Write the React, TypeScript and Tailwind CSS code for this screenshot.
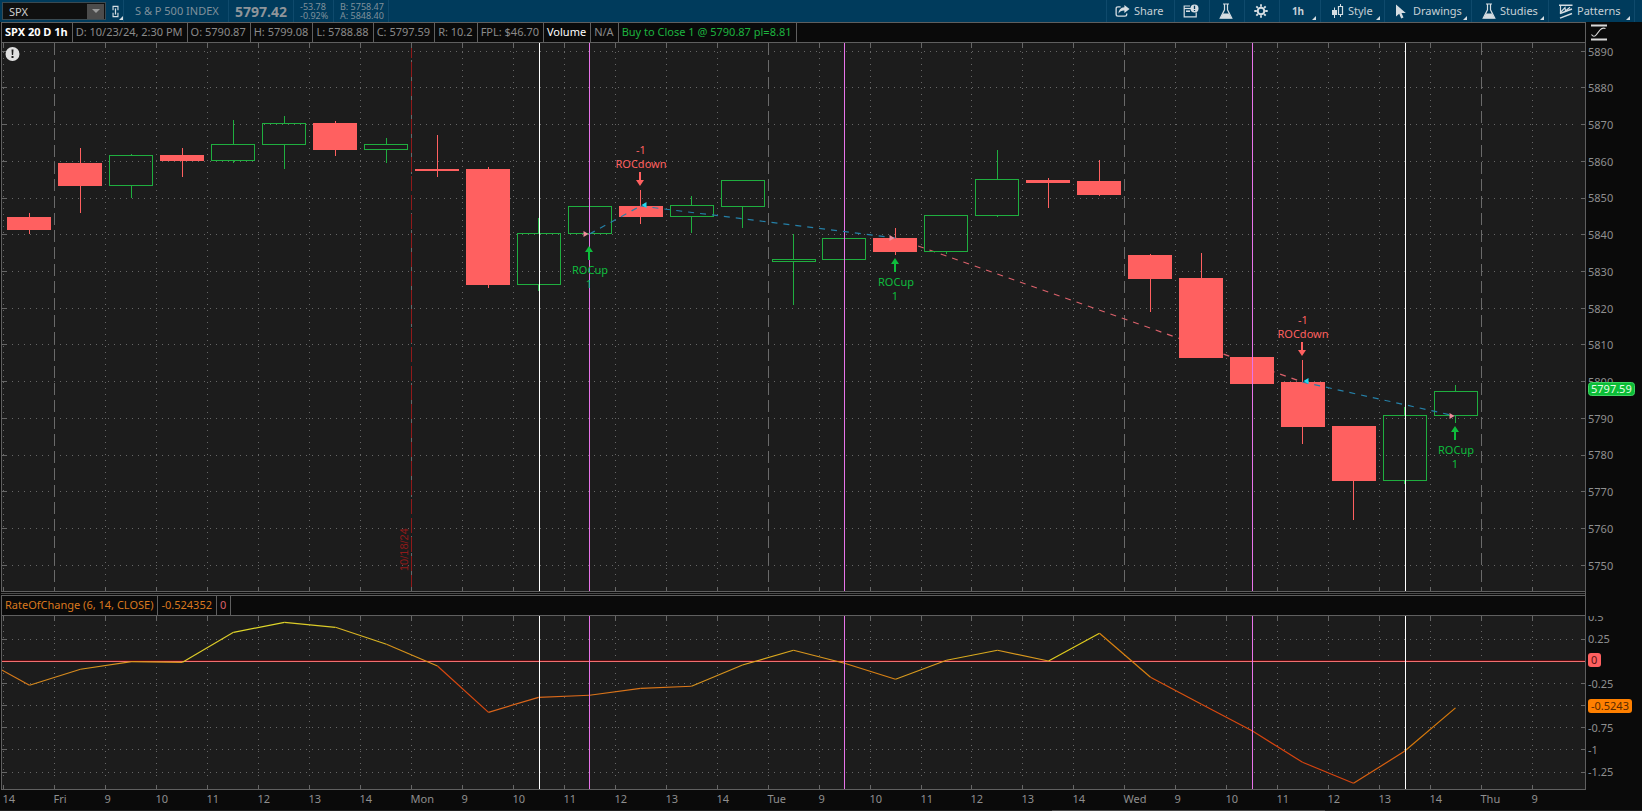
import React from 'react';

type Candle = [open: number, high: number, low: number, close: number];

interface Size {
  width: number;
  height: number;
}

const RED = '#ff6060';
const GREEN = '#1fae3f';
const GRID = '#666666';

const BARS_VISIBLE = 31.06;

const candles: Candle[] = [
  [5844.93, 5846.02, 5840.3, 5841.39],
  [5859.64, 5863.73, 5846.02, 5853.38],
  [5853.38, 5862.09, 5850.11, 5861.82],
  [5861.82, 5863.73, 5855.83, 5860.18],
  [5860.18, 5871.35, 5859.64, 5864.81],
  [5864.54, 5872.44, 5858.01, 5870.53],
  [5870.53, 5871.08, 5861.55, 5863.18],
  [5863.18, 5866.45, 5859.64, 5864.81],
  [5858.01, 5867.27, 5855.83, 5857.46],
  [5858.01, 5858.55, 5825.6, 5826.42],
  [5826.42, 5844.66, 5824.78, 5840.58],
  [5840.3, 5847.93, 5837.85, 5847.93],
  [5847.93, 5852.29, 5843.03, 5844.93],
  [5844.93, 5850.65, 5840.58, 5848.2],
  [5847.66, 5855.01, 5841.94, 5855.01],
  [5832.68, 5840.3, 5820.97, 5833.5],
  [5833.22, 5839.22, 5833.22, 5839.22],
  [5839.22, 5841.94, 5834.59, 5835.4],
  [5835.4, 5845.48, 5834.86, 5845.48],
  [5845.21, 5863.18, 5844.93, 5855.28],
  [5855.01, 5855.56, 5847.39, 5854.19],
  [5854.74, 5860.46, 5850.65, 5850.93],
  [5834.59, 5834.86, 5819.06, 5828.05],
  [5828.32, 5835.13, 5806.54, 5806.54],
  [5806.81, 5816.88, 5799.18, 5799.46],
  [5800.0, 5805.99, 5783.12, 5787.75],
  [5788.02, 5788.02, 5762.42, 5773.04],
  [5773.04, 5793.19, 5772.22, 5791.01],
  [5790.87, 5799.08, 5788.88, 5797.59],
];

// value at the end of each segment and the colour of that segment
const roc: [number, string][] = [
  [0.048, '#d77a1a'],
  [-0.269, '#d77a1a'],
  [-0.088, '#d68a1e'],
  [-0.002, '#d9951e'],
  [-0.009, '#dc961e'],
  [0.33, '#dccb28'],
  [0.443, '#e0d82a'],
  [0.387, '#dccc28'],
  [0.195, '#d9b423'],
  [-0.051, '#d8921a'],
  [-0.575, '#d9480f'],
  [-0.405, '#d9651a'],
  [-0.382, '#d9681a'],
  [-0.303, '#d9741a'],
  [-0.28, '#d9761a'],
  [-0.04, '#d8941e'],
  [0.127, '#d9a81e'],
  [-0.02, '#d8951e'],
  [-0.201, '#d98014'],
  [0.014, '#d99b1e'],
  [0.127, '#d9aa1e'],
  [0.006, '#d9981e'],
  [0.319, '#e0cc1e'],
  [-0.179, '#d9800f'],
  [-0.484, '#d9520f'],
  [-0.786, '#d9480f'],
  [-1.14, '#d6440f'],
  [-1.378, '#d6440f'],
  [-1.016, '#d9600f'],
  [-0.5243, '#d97a0a'],
];

const timeLabels = [
  '14', 'Fri', '9', '10', '11', '12', '13', '14', 'Mon', '9', '10', '11', '12', '13', '14', 'Tue',
  '9', '10', '11', '12', '13', '14', 'Wed', '9', '10', '11', '12', '13', '14', 'Thu', '9',
];

const prices = [5890, 5880, 5870, 5860, 5850, 5840, 5830, 5820, 5810, 5800, 5790, 5780, 5770, 5760, 5750];
const rocLevels = [0.5, 0.25, 0, -0.25, -0.5, -0.75, -1, -1.25];

const signals: { bar: number; kind: 'up' | 'down' }[] = [
  { bar: 11, kind: 'up' },
  { bar: 12, kind: 'down' },
  { bar: 17, kind: 'up' },
  { bar: 25, kind: 'down' },
  { bar: 28, kind: 'up' },
];

const verticals = [
  { bar: 10, color: '#ffffff', shift: 1 },
  { bar: 11, color: '#e874ea', shift: 0 },
  { bar: 16, color: '#e874ea', shift: 0 },
  { bar: 24, color: '#e874ea', shift: 0 },
  { bar: 27, color: '#ffffff', shift: 1 },
];

const PRICE_TOP = 5892.32;
const PRICE_SPAN = 149.24;
const ROC_TOP = 0.5147;
const ROC_SPAN = 1.957;

const gridX = (i: number, width: number) => Math.floor(52.6 + ((i - 1) * width) / BARS_VISIBLE) + 0.5;
const barX = (i: number, width: number) => Math.floor(27.6 + i * (width / BARS_VISIBLE - 0.03)) + 0.5;
const bodyX = (i: number, width: number) => Math.floor(56.5 + ((i - 1) * width) / BARS_VISIBLE);
const priceY = (p: number, height: number) => Math.round(((PRICE_TOP - p) / PRICE_SPAN) * height);
const rocY = (v: number, height: number) => ((ROC_TOP - v) / ROC_SPAN) * height;

function useSize(initial: Size) {
  const ref = React.useRef<HTMLDivElement>(null);
  const [size, setSize] = React.useState(initial);

  React.useLayoutEffect(() => {
    const el = ref.current;
    if (!el) return;
    const update = () => setSize({ width: el.clientWidth, height: el.clientHeight });
    update();
    const observer = new ResizeObserver(update);
    observer.observe(el);
    return () => observer.disconnect();
  }, []);

  return { ref, ...size };
}

const Grid = ({ width, height, ys, days }: Size & { ys: number[]; days?: boolean }) => (
  <g stroke={GRID} strokeWidth={1}>
    {ys.map((y) => (
      <g key={y}>
        <line x1={4} x2={width - 12} y1={y} y2={y} strokeDasharray="1 5" />
        <line x1={0} x2={5} y1={y} y2={y} />
        <line x1={width - 4} x2={width} y1={y} y2={y} />
      </g>
    ))}
    {timeLabels.map((label, i) => {
      const x = gridX(i, width);
      const isDay = days && /[a-z]/.test(label);
      return (
        <g key={i}>
          {isDay ? (
            <line x1={x} x2={x} y1={0} y2={height} strokeDasharray="12 5" stroke="#6a6a6a" />
          ) : (
            <line x1={x} x2={x} y1={9} y2={height - 8} strokeDasharray="1 5" />
          )}
          {isDay && label === 'Mon' && (
            <line x1={x} x2={x} y1={0} y2={height} strokeDasharray="15 4" stroke="#8f1a1a" />
          )}
          <line x1={x} x2={x} y1={0} y2={5} />
          <line x1={x} x2={x} y1={height - 4} y2={height} />
        </g>
      );
    })}
  </g>
);

const VerticalLines = ({ width, height }: Size) => (
  <>
    {verticals.map(({ bar, color, shift }) => {
      const x = barX(bar, width) + shift;
      return <line key={bar} x1={x} x2={x} y1={0} y2={height} stroke={color} />;
    })}
  </>
);

const PriceChart = () => {
  const { ref, width, height } = useSize({ width: 1583, height: 548 });
  const at = (bar: number, price: number) => ({ x: barX(bar, width), y: priceY(price, height) });
  const trade = (a: { x: number; y: number }, b: { x: number; y: number }, color: string) => (
    <line x1={a.x} y1={a.y} x2={b.x} y2={b.y} stroke={color} strokeWidth={1.2} strokeDasharray="6 6" />
  );
  const entry1 = at(11, 5840.3);
  const exit1 = at(12, 5847.93);
  const entry2 = at(17, 5839.22);
  const exit2 = at(25, 5800);
  const entry3 = at(28, 5790.87);

  return (
    <div ref={ref} className="relative min-h-0 min-w-0 flex-1 overflow-hidden border-x border-b border-[#5f5f5f] bg-[#1c1c1c]">
      <svg className="absolute inset-0 h-full w-full text-[11px]" aria-label="SPX hourly candles">
        <Grid
          width={width}
          height={height}
          days
          ys={prices.map((p) => Math.floor(((PRICE_TOP - p) / PRICE_SPAN) * height - 0.3) + 0.5)}
        />
        <text
          transform={`translate(${gridX(8, width) - 4} ${height - 20}) rotate(-90)`}
          fill="#8f1a1a"
          className="font-['Liberation_Sans']"
        >
          10/18/24
        </text>
        {trade(entry2, exit2, '#d9606a')}
        {candles.map(([open, high, low, close], i) => {
          const x = barX(i, width);
          const left = bodyX(i, width);
          const up = close > open;
          const top = priceY(Math.max(open, close), height);
          const bottom = priceY(Math.min(open, close), height);
          const color = up ? GREEN : RED;
          return (
            <g key={i} stroke={color}>
              <line x1={x} x2={x} y1={priceY(high, height)} y2={top} />
              <line x1={x} x2={x} y1={bottom} y2={priceY(low, height)} />
              {up ? (
                <rect x={left + 0.5} y={top + 0.5} width={43} height={Math.max(bottom - top - 1, 1)} fill="none" />
              ) : (
                <rect x={left} y={top} width={44} height={Math.max(bottom - top, 1)} fill={RED} stroke="none" />
              )}
            </g>
          );
        })}
        <VerticalLines width={width} height={height} />
        {trade(entry1, exit1, '#2580a8')}
        {trade(exit1, entry2, '#2580a8')}
        {trade(exit2, entry3, '#2580a8')}
        {[entry1, entry2, entry3].map(({ x, y }) => (
          <path key={x} d={`M${x - 6} ${y - 3}L${x - 1} ${y}L${x - 6} ${y + 3}Z`} fill="#f08c9c" />
        ))}
        {[exit1, exit2].map(({ x, y }) => (
          <path key={x} d={`M${x + 6} ${y - 4}L${x + 1} ${y - 1}L${x + 6} ${y + 2}Z`} fill="#22d8f0" />
        ))}
        {signals.map(({ bar, kind }) => {
          const x = barX(bar, width) - 0.5;
          const [, high, low] = candles[bar];
          if (kind === 'up') {
            const y = priceY(low, height) + 3;
            return (
              <g key={bar} fill="#0ebc3c" textAnchor="middle">
                <path d={`M${x} ${y}L${x + 4} ${y + 6}H${x + 1}V${y + 14}H${x - 1}V${y + 6}H${x - 4}Z`} />
                <text x={x + 1} y={y + 28}>ROCup</text>
                <text x={x} y={y + 42}>1</text>
              </g>
            );
          }
          const y = priceY(high, height) - 4;
          return (
            <g key={bar} fill={RED} textAnchor="middle">
              <path d={`M${x} ${y}L${x + 4} ${y - 6}H${x + 1}V${y - 14}H${x - 1}V${y - 6}H${x - 4}Z`} />
              <text x={x + 1} y={y - 18}>ROCdown</text>
              <text x={x + 1} y={y - 32}>-1</text>
            </g>
          );
        })}
        <circle cx={10.5} cy={11} r={7} fill="#e0e0e0" />
        <path d="M9.5 6.5h2l-.4 5.5h-1.2zM9.5 13h2v2h-2z" fill="#1c1c1c" />
      </svg>
    </div>
  );
};

const PriceAxis = () => {
  const { ref, height } = useSize({ width: 56, height: 549 });
  const h = height - 1;
  const tagY = priceY(5797.59, h) - 2;
  return (
    <div ref={ref} className="relative w-14 shrink-0">
      <svg className="absolute inset-0 h-full w-full text-[11px]" aria-label="Price axis">
        {prices.map((p) => (
          <text key={p} x={2} y={priceY(p, h) + 4} fill="#8f8f8f">{p}</text>
        ))}
        <rect x={2.5} y={tagY - 6.5} width={46} height={13} rx={3} fill="#0bbd37" stroke="#3fd463" />
        <text x={5} y={tagY + 4} fill="#e6ffe6">5797.59</text>
      </svg>
    </div>
  );
};

const RocChart = () => {
  const { ref, width, height } = useSize({ width: 1583, height: 173 });
  const zero = Math.floor(rocY(0, height)) + 0.5;
  return (
    <div ref={ref} className="relative min-h-0 min-w-0 flex-1 overflow-hidden border-x border-b border-[#5f5f5f] bg-[#1c1c1c]">
      <svg className="absolute inset-0 h-full w-full" aria-label="Rate of change">
        <Grid
          width={width}
          height={height}
          ys={rocLevels.filter((v) => v !== 0 && v < 0.5).map((v) => Math.floor(rocY(v, height)) + 0.5)}
        />
        <line x1={0} x2={width} y1={zero - 1} y2={zero - 1} stroke="#5a0c10" />
        <line x1={0} x2={width} y1={zero} y2={zero} stroke="#f07070" />
        {roc.slice(1).map(([value, color], i) => (
          <line
            key={i}
            x1={barX(i - 1, width)}
            y1={rocY(roc[i][0], height)}
            x2={barX(i, width)}
            y2={rocY(value, height)}
            stroke={color}
            strokeWidth={1.2}
          />
        ))}
        <VerticalLines width={width} height={height} />
      </svg>
    </div>
  );
};

const RocAxis = () => {
  const { ref, height } = useSize({ width: 56, height: 174 });
  const h = height - 1;
  const tagY = Math.round(rocY(-0.5243, h)) - 2;
  const zeroY = Math.round(rocY(0, h)) - 1;
  return (
    <div ref={ref} className="relative w-14 shrink-0">
      <svg className="absolute inset-0 h-full w-full text-[11px]" aria-label="Rate of change axis">
        {rocLevels.filter((v) => v !== 0 && v !== -0.5).map((v) => (
          <text key={v} x={2} y={Math.round(rocY(v, h)) + 4} fill="#8f8f8f">{v}</text>
        ))}
        <rect x={2} y={zeroY - 7} width={13} height={14} rx={3} fill={RED} />
        <text x={5} y={zeroY + 4} fill="#5c1010">0</text>
        <rect x={2} y={tagY - 7} width={44} height={14} rx={3} fill="#ff8000" />
        <text x={5} y={tagY + 4} fill="#5a2a00">-0.5243</text>
      </svg>
    </div>
  );
};

const TimeAxis = () => {
  const { ref, width } = useSize({ width: 1585, height: 20 });
  return (
    <div className="flex h-5 shrink-0">
      <div ref={ref} className="relative min-w-0 flex-1">
        <svg className="absolute inset-0 h-full w-full text-[11px]" aria-label="Time axis">
          {timeLabels.map((label, i) => (
            <text key={i} x={gridX(i, width - 2)} y={13} fill="#8f8f8f">{label}</text>
          ))}
        </svg>
      </div>
      <div className="w-14 shrink-0" />
    </div>
  );
};

const Corner = () => (
  <span className="absolute right-1 bottom-0.5 border-b-4 border-l-4 border-b-[#d5dde2] border-l-transparent" />
);

const ShareIcon = () => (
  <svg width="15" height="14" viewBox="0 0 16 14" fill="none">
    <path d="M6 2.5H3.2Q1.2 2.5 1.2 4.5v6q0 2 2 2h7.3q2 0 2-2V9.6" stroke="#d5dde2" strokeWidth="1.4" />
    <path d="M10 .5l5.5 4.3L10 9V6.5Q6 6.3 3.6 10 3.800 3.600 10 3z" fill="#d5dde2" />
  </svg>
);

const WindowAlertIcon = () => (
  <svg width="16" height="14" viewBox="0 0 16 14" fill="none">
    <path d="M7 2H1.200v10.800h12V8.500" stroke="#d5dde2" strokeWidth="1.200" />
    <path d="M1 4.500h7" stroke="#d5dde2" strokeWidth="1.200" />
    <path d="M3 7.200h4" stroke="#d5dde2" strokeWidth="1.600" />
    <circle cx="11.500" cy="4.400" r="4" fill="#d5dde2" />
    <path d="M11.500 1.800v3.200M11.500 5.900v1.200" stroke="#043b5c" strokeWidth="1.300" />
  </svg>
);

const FlaskIcon = () => (
  <svg width="14" height="17" viewBox="0 0 14 17" fill="none">
    <path d="M4 1h6M5.500 1v5.800L1.200 15.200h11.600L8.500 6.800V1" stroke="#d5dde2" strokeWidth="1.200" />
    <path d="M4 10.500h6l2.600 4.700H1.400z" fill="#d5dde2" />
  </svg>
);

const GearIcon = () => (
  <svg width="14" height="14" viewBox="0 0 14 14" fill="none" stroke="#d5dde2">
    <circle cx="7" cy="7" r="3.300" strokeWidth="2" />
    <path
      d="M7 .3v2.500M7 11.200v2.500M.3 7h2.500M11.200 7h2.500M2.300 2.300l1.700 1.700M10 10l1.700 1.700M2.300 11.700L4 10M10 4l1.700-1.700"
      strokeWidth="1.800"
    />
  </svg>
);

const StyleIcon = () => (
  <svg width="13" height="14" viewBox="0 0 13 14" fill="none" stroke="#d5dde2">
    <path d="M3.500 3.500V14M9.500 0v2M9.500 10.500V13" />
    <rect x="1" y="6" width="5" height="5" fill="#d5dde2" stroke="none" />
    <path d="M7.500 2.500h4v8h-4z" strokeWidth="1.200" />
  </svg>
);

const CursorIcon = () => (
  <svg width="12" height="15" viewBox="0 0 12 15" fill="#d5dde2">
    <path d="M1 .5v12l3.200-2.800 2 4.800 2.300-1-2-4.600h4.300z" />
  </svg>
);

const PatternsIcon = () => (
  <svg width="14" height="15" viewBox="0 0 14 15" fill="none" stroke="#d5dde2">
    <path d="M0 1.200h13.500M1 9.500L13 5M1 14.200L13 9.500" strokeWidth="1.400" />
    <path d="M1.500 1.500v7L6 3.500l.5 3.500L11 3.200" strokeWidth="1.200" />
  </svg>
);

const LinkIcon = () => (
  <svg width="7" height="13" viewBox="0 0 8 14" fill="none" stroke="#d5dde2">
    <path
      d="M1.200 5.500V1.200h5.600v4.300M1.200 8.500v4.300h5.600V8.500"
      strokeWidth="1.300"
    />
    <path d="M4 3.500v7" strokeWidth="1.400" />
  </svg>
);

const toolClass = 'relative flex h-full shrink-0 items-center border-l border-[#0f4a6c]';

const Toolbar = () => (
  <header className="flex h-[22px] shrink-0 items-center bg-[#003b5c] text-[#c6d0d6]">
    <div className="ml-0.5 flex h-[18px] w-[104px] shrink-0 items-center border border-[#3a4a52] bg-[#101010] pr-px">
      <input
        aria-label="Symbol"
        defaultValue="SPX"
        className="h-full min-w-0 flex-1 bg-transparent pl-1.5 text-[11px] text-[#d0d0d0] outline-none"
      />
      <button aria-label="Symbol list" className="flex h-[15px] w-[17px] items-center justify-center bg-[#4c4c4c]">
        <svg width="8" height="4" viewBox="0 0 8 4"><path d="M0 0h8L4 4z" fill="#9a9a9a" /></svg>
      </button>
    </div>
    <button aria-label="Link symbol" className="relative flex h-full w-[17px] shrink-0 items-center justify-center pl-0.5">
      <LinkIcon />
      <span className="absolute right-0 bottom-0.5 border-b-4 border-l-4 border-b-[#d5dde2] border-l-transparent" />
    </button>
    <div className="flex h-full items-center text-[#7f909b]">
      <span className="flex h-full w-[105px] items-center border-l border-[#0f4a6c] pl-[11px] text-[11px]">S &amp; P 500 INDEX</span>
      <span className="flex h-full w-[65px] items-center border-l border-[#0f4a6c] pl-1.5 text-[14px] font-bold text-[#8f959a]">5797.42</span>
      <span className="flex h-full w-10 flex-col justify-center border-l border-[#0f4a6c] pl-1.5 text-[9px] leading-[9px]">
        <span>-53.78</span>
        <span>-0.92%</span>
      </span>
      <span className="flex h-full w-[55px] flex-col justify-center border-l border-[#0f4a6c] pl-1.5 text-[9px] leading-[9px]">
        <span>B: 5758.47</span>
        <span>A: 5848.40</span>
      </span>
      <span className="h-full border-l border-[#0f4a6c]" />
    </div>
    <div className="ml-auto flex h-full items-center text-[11px]">
      <button className={`${toolClass} w-[68px] gap-1 pl-2`}><ShareIcon />Share</button>
      <button aria-label="Chart alerts" className={`${toolClass} w-[35px] justify-center pr-0.5`}><WindowAlertIcon /></button>
      <button aria-label="Edit studies" className={`${toolClass} w-[35px] justify-center pr-0.5`}><FlaskIcon /></button>
      <button aria-label="Settings" className={`${toolClass} w-[35px] justify-center pr-0.5`}><GearIcon /></button>
      <button className={`${toolClass} w-[41px] justify-center pr-1 text-[10px] font-bold`}>1h<Corner /></button>
      <button className={`${toolClass} w-[64px] gap-1 pl-2.5`}><StyleIcon />Style<Corner /></button>
      <button className={`${toolClass} w-[87px] gap-1.5 pl-2.5`}><CursorIcon />Drawings<Corner /></button>
      <button className={`${toolClass} w-[77px] gap-1 pl-2.5`}><FlaskIcon />Studies<Corner /></button>
      <button className={`${toolClass} w-[86px] gap-1 pl-2.5`}><PatternsIcon />Patterns<Corner /></button>
      <span className="h-full w-2 border-l border-[#0f4a6c]" />
    </div>
  </header>
);

const Cell = ({ children, className = 'text-[#8a8a8a]' }: { children: React.ReactNode; className?: string }) => (
  <span className={`flex h-full shrink-0 items-center border-r border-[#5f5f5f] pr-1 pl-[3px] whitespace-nowrap ${className}`}>
    {children}
  </span>
);

const App: React.FC = () => (
  <div className="flex h-screen flex-col overflow-hidden bg-[#0a0a0a] font-['Noto_Sans',sans-serif] text-[11px]">
    <Toolbar />

    <main className="flex min-h-0 flex-1 flex-col pl-px">
      {/* Price pane */}
      <div className="flex h-[21px] shrink-0">
        <div className="flex min-w-0 flex-1 items-center overflow-hidden border border-[#5f5f5f]">
          <Cell className="font-bold text-white">SPX 20 D 1h</Cell>
          <Cell>D: 10/23/24, 2:30 PM</Cell>
          <Cell>O: 5790.87</Cell>
          <Cell>H: 5799.08</Cell>
          <Cell>L: 5788.88</Cell>
          <Cell>C: 5797.59</Cell>
          <Cell>R: 10.2</Cell>
          <Cell>FPL: $46.70</Cell>
          <Cell className="text-white">Volume</Cell>
          <Cell>N/A</Cell>
          <Cell className="text-[#1db33f]">Buy to Close 1 @ 5790.87 pl=8.81</Cell>
        </div>
        <button aria-label="Axis scaling" className="flex w-14 shrink-0 items-center pl-[5px]">
          <svg width="16" height="17" viewBox="0 0 16 17" fill="none" stroke="#d8d8d8">
            <path d="M0 1.500h16M0 15.500h16" strokeWidth="2" />
            <path d="M.5 10.500q2.500 3.500 5 0l3.500-4.500q2-2.500 5.500-1.500" strokeWidth="1.200" />
          </svg>
        </button>
      </div>
      <div className="flex min-h-0 flex-[549]">
        <PriceChart />
        <PriceAxis />
      </div>

      <div className="mr-14 h-[3px] shrink-0 border-r border-[#5f5f5f] py-px">
        <div className="h-px bg-[#4a4a4a]" />
      </div>

      {/* Rate of change pane */}
      <div className="flex h-[21px] shrink-0">
        <div className="flex min-w-0 flex-1 items-center overflow-hidden border border-[#5f5f5f]">
          <Cell className="text-[#d9781e]">RateOfChange (6, 14, CLOSE)</Cell>
          <Cell className="text-[#d9781e]">-0.524352</Cell>
          <Cell className="text-[#d9606a]">0</Cell>
        </div>
        <div className="w-14 shrink-0" />
      </div>
      <div className="flex min-h-0 flex-[174]">
        <RocChart />
        <RocAxis />
      </div>
      <TimeAxis />
    </main>

    <footer className="flex h-px shrink-0 bg-[#202020]">
      <span className="ml-auto w-[273px] bg-[#4a4a4a]" />
      <span className="w-[317px]" />
    </footer>
  </div>
);

export default App;
